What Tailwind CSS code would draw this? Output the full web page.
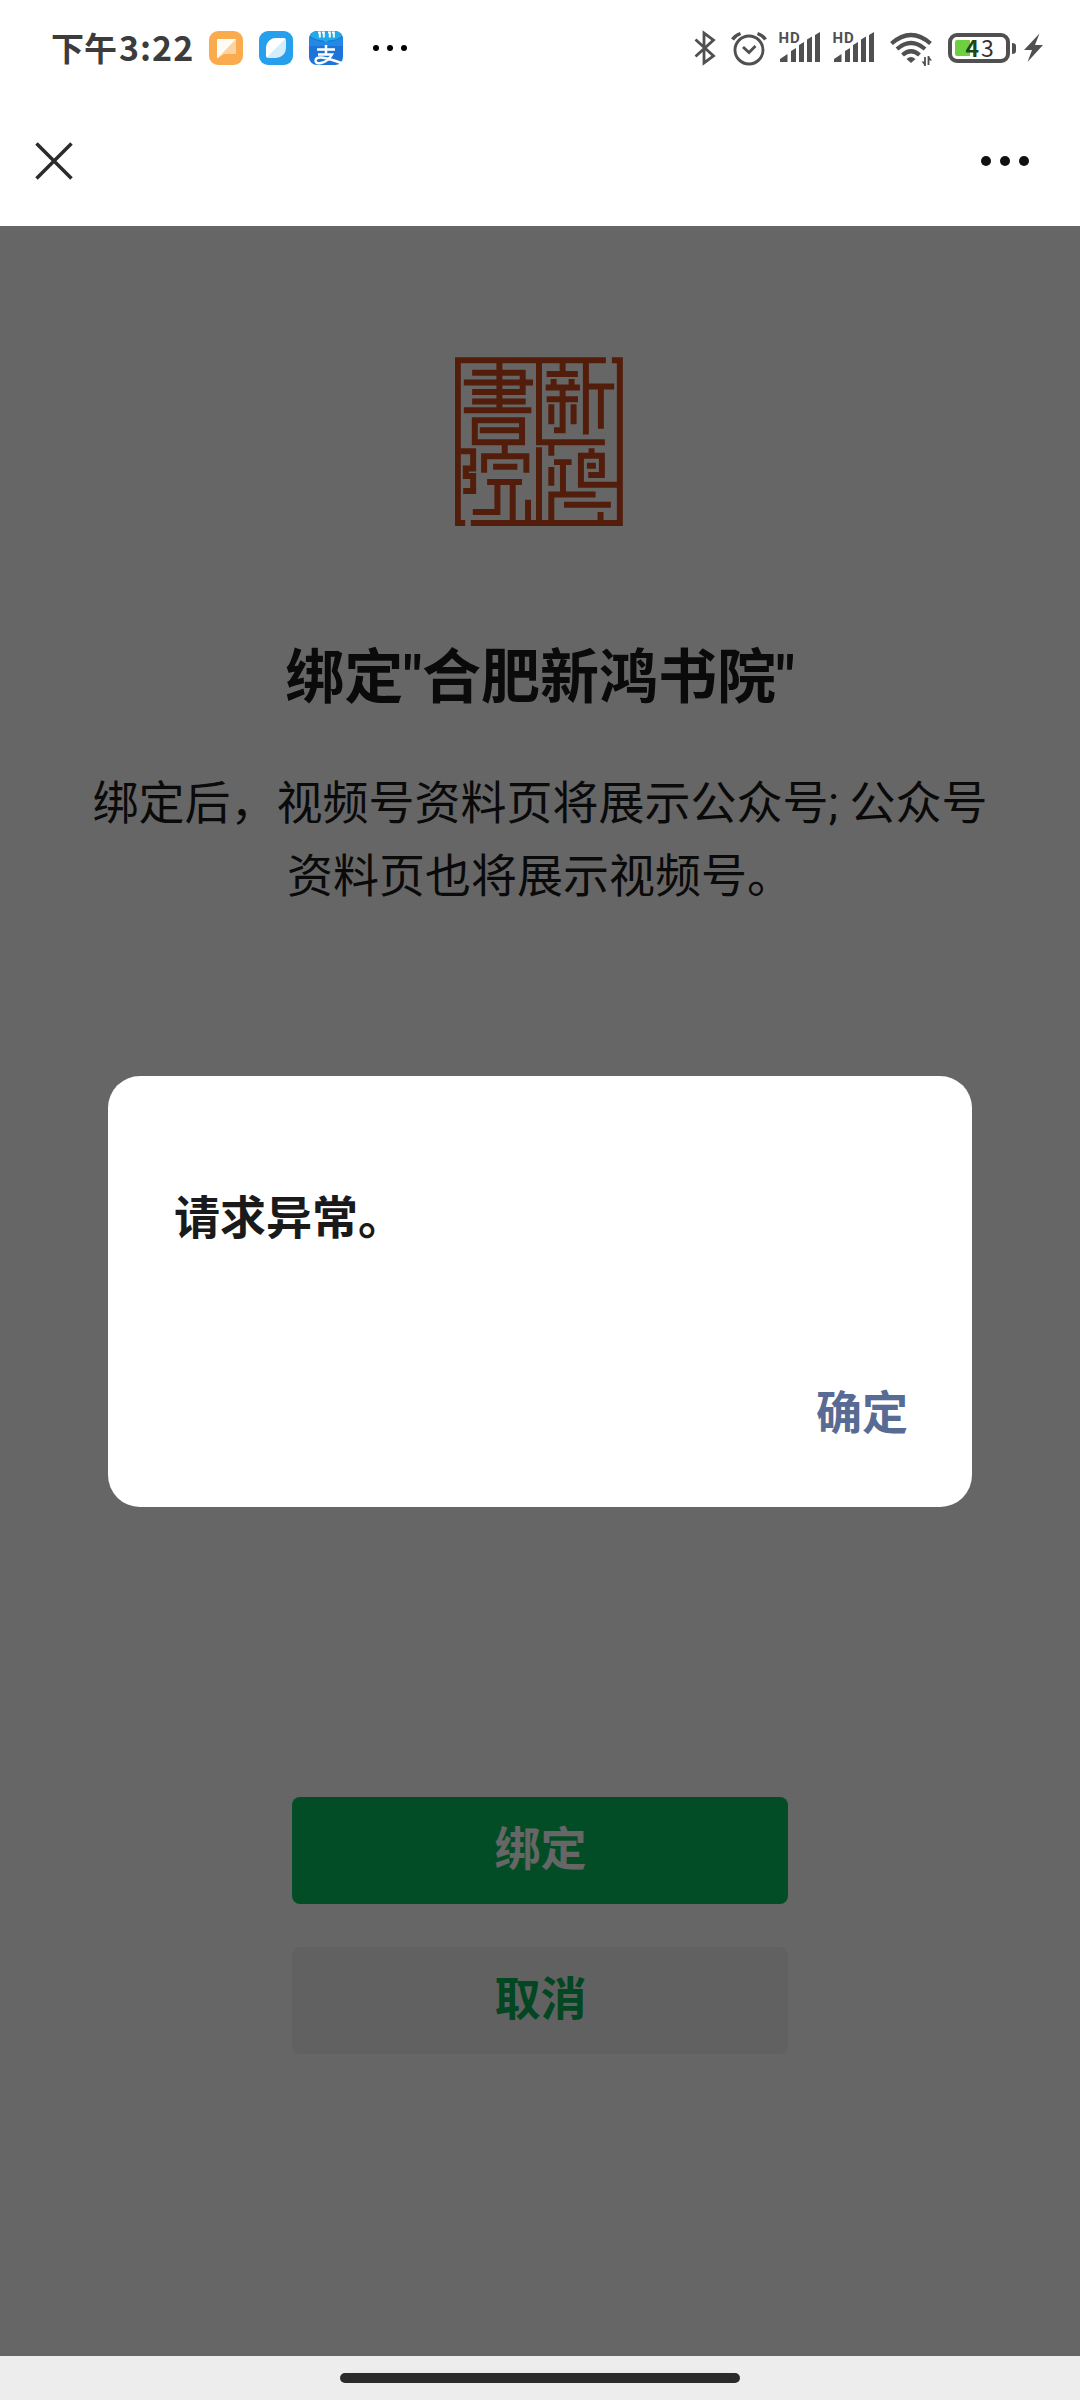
<!DOCTYPE html>
<html lang="zh-CN">
   <head>
      <meta charset="UTF-8" />
      <meta name="viewport" content="width=device-width, initial-scale=1.0" />
      <script src="https://cdn.jsdelivr.net/npm/@tailwindcss/browser@4"></script>
      <title>绑定公众号</title>
   </head>

   <body
      class="flex flex-col w-[1080px] h-[2400px] overflow-hidden bg-white font-['Noto_Sans_CJK_SC',sans-serif]"
   >
      <!-- Status Bar -->
      <div class="h-24 shrink-0 flex justify-between items-center pl-[51px] pr-[37px]">
         <div class="flex items-center text-[#3c3c3c]">
            <div class="w-[158px] flex items-center pb-0.5 font-bold leading-none whitespace-nowrap">
               <span class="text-[33px]">下午</span>
               <span class="text-[34px] tracking-[1px] ml-0.5">3:22</span>
            </div>
            <div class="flex gap-4">
               <svg class="size-[34px]" viewBox="0 0 34 34">
                  <rect width="34" height="34" rx="9" fill="#f9ab4e" />
                  <path d="M8 9q0-1 1-1h17q1 0 1 1v13q0 1-1 1H15l-6 4q-1 0-1-1z" fill="#fcd3a0" />
                  <path d="M8 9q0-1 1-1h18L9 27q-1 0-1-1z" fill="#fffaf2" />
               </svg>
               <svg class="size-[34px]" viewBox="0 0 34 34">
                  <rect width="34" height="34" rx="9" fill="#26a0ec" />
                  <path d="M17 7h8q2 0 2 2v8a10 10 0 0 1-10 10H9q-2 0-2-2v-8A10 10 0 0 1 17 7z" fill="#d3edfc" />
                  <path d="M17 7h8l1 1L8 26l-1-1v-8A10 10 0 0 1 17 7z" fill="#fff" />
               </svg>
               <svg class="size-[34px]" viewBox="0 0 34 34">
                  <rect width="34" height="34" rx="8" fill="#1c74d8" />
                  <path d="M0 6q17 10 34 0v9H0z" fill="#2489e6" />
                  <path d="M1 5Q3 0 9 0h16q6 0 8 5-5 4-13 4.500l-3 2-3-2Q6 9 1 5z" fill="#22a9e8" />
                  <path d="M9 1.500h1.800v5M13 1.500h1.800v5M19 1.500h1.800v5M23 1.500h1.800v5" fill="none" stroke="#fff" stroke-width="2" />
                  <path d="M8 18.500h18M17 14v9M9 23.500h14q-4 7-11 8.500-5 1-5.500-2 0-4 6-3.500 8 1 21 6" fill="none" stroke="#fff" stroke-width="2.500" />
               </svg>
            </div>
            <div class="flex gap-2 ml-[30px]">
               <i class="size-1.5 rounded-full bg-black"></i>
               <i class="size-1.5 rounded-full bg-black"></i>
               <i class="size-1.5 rounded-full bg-black"></i>
            </div>
         </div>

         <div class="flex items-center">
            <!-- Bluetooth -->
            <svg class="w-[22px] h-9" viewBox="0 0 22 36" fill="none" stroke="#505050" stroke-width="2.800">
               <path d="M1.500 9.500l18 16.500-9.500 7V3l9.500 7-18 16.500" />
            </svg>
            <!-- Alarm -->
            <svg class="w-9 h-9 ml-[15px]" viewBox="0 0 36 36" fill="none" stroke="#505050" stroke-width="2.900">
               <circle cx="18" cy="20" r="14" />
               <path d="M12 17l6 5.500 6.500-6.500" />
               <path d="M1.500 9.500Q4 5.500 9.500 3.500M26.500 3.500Q32 5.500 34.500 9.500" stroke-width="3.400" />
            </svg>
            <!-- Signal -->
            <svg class="w-[43px] h-9 ml-[11px] overflow-visible" viewBox="0 0 43 36" fill="#505050">
               <text x="0.500" y="13" font-family="Roboto, sans-serif" font-size="15" font-weight="700" letter-spacing="1">HD</text>
               <path d="M2 32v-3l7.500-5v8zM13 32V21l5-3v14zM21 32V15l5-3v20zM29 32V9.500l5-3V32zM37 32V5l5-3v30z" />
            </svg>
            <svg class="w-[43px] h-9 ml-[11px] overflow-visible" viewBox="0 0 43 36" fill="#505050">
               <text x="0.500" y="13" font-family="Roboto, sans-serif" font-size="15" font-weight="700" letter-spacing="1">HD</text>
               <path d="M2 32v-3l7.500-5v8zM13 32V21l5-3v14zM21 32V15l5-3v20zM29 32V9.500l5-3V32zM37 32V5l5-3v30z" />
            </svg>
            <!-- Wifi -->
            <svg class="w-[43px] h-9 ml-[15px]" viewBox="0 0 43 36" fill="none" stroke="#505050" stroke-width="4.200">
               <path d="M1.500 13.500Q21 -3.500 40.500 13.500M7 19Q21 7 35 19M12.500 25Q21 17.500 29.500 25" />
               <path d="M16.500 29q4.500-4 9 0l-4.500 4z" fill="#505050" stroke="none" />
               <path d="M35 27v9M38.500 26v9" stroke-width="1.800" />
               <path d="M35 36l-3.500-4.500H35zM38.500 26l3.500 4.500h-3.500z" fill="#505050" stroke="none" />
            </svg>
            <!-- Battery -->
            <svg class="w-[69px] h-9 ml-[15px]" viewBox="0 0 69 36">
               <rect x="2" y="5" width="58" height="26" rx="7" fill="#fff" stroke="#505050" stroke-width="4" />
               <path d="M9 10h13v16H9q-2 0-2-2V12q0-2 2-2z" fill="#6fcf43" />
               <path d="M64 13q4 0 4 3v5q0 3-4 3z" fill="#505050" />
               <text x="17.500" y="26.500" font-family="'Noto Sans CJK SC', sans-serif" font-size="23" letter-spacing="2" fill="#333"><tspan fill="#184a12" font-weight="700">4</tspan>3</text>
            </svg>
            <svg class="w-[19px] h-9 ml-[7px]" viewBox="0 0 19 36" fill="#505050">
               <path d="M15.500 3.500L0 20h8L3.500 32 19 15h-8z" />
            </svg>
         </div>
      </div>

      <!-- Header -->
      <header class="h-[130px] shrink-0 flex justify-between items-center pl-[34px] pr-[51px]">
         <svg class="size-10" viewBox="0 0 40 40" fill="none" stroke="#2b2b2b" stroke-width="3.500">
            <path d="M2.500 2.500l35 35M37.500 2.500l-35 35" />
         </svg>
         <div class="flex gap-[9px]">
            <i class="size-2.5 rounded-full bg-[#111]"></i>
            <i class="size-2.5 rounded-full bg-[#111]"></i>
            <i class="size-2.5 rounded-full bg-[#111]"></i>
         </div>
      </header>

      <!-- Main Content -->
      <main class="relative h-[2130px] shrink-0 flex flex-col items-center pt-[131px]">
         <svg class="w-[168px] h-[169px] shrink-0 -translate-x-px" viewBox="48 50 504 508" fill="none" stroke="#d04a1c" stroke-width="18">
            <!-- border -->
            <path d="M501 60H56V549H78M519 60H543V549H95" />
            <path d="M300 60V306H498M300 321V549" />
            <!-- 書 -->
            <path d="M181 60V210M99 97H251V155M74 127H282M99 155H260M99 184H260M74 210H277" />
            <path d="M107 306V240H249V306ZM122 270H249M197 306V348" />
            <!-- 院 -->
            <path d="M64 333H102V385H80V408H102V453H72M135 398V348H262V398M162 380H235M144 426H249M175 426V516H101M221 426V549M267 479V549" />
            <!-- 新 -->
            <path d="M371 60V101M323 101H417M344 116V142M398 116V142M320 142H423M323 177H417M371 142V270H345M337 192V252M404 192V252M441 60V283M441 139H526M486 139V266" />
            <!-- 鴻 -->
            <path d="M337 306V347M337 381V437M337 549V463H470M345 366H398M372 366V463M375 494H516M485 516V549" />
            <path d="M458 324V347M543 434H426V347H489V405H448M444 377H471" />
         </svg>

         <h1 class="mt-[103px] h-[88px] leading-[88px] text-[59px] font-bold text-[#1a1a1a] whitespace-nowrap">
            绑定<span class="font-[Roboto]">"</span>合肥新鸿书院<span class="font-[Roboto]">"</span>
         </h1>

         <p class="mt-[46px] text-[46px] leading-[73px] text-center text-[#1a1a1a] whitespace-nowrap">
            绑定后，视频号资料页将展示公众号<span class="font-[Roboto] leading-none">; </span>公众号<br />资料页也将展示视频号。
         </p>

         <div class="absolute top-[1571px] flex flex-col gap-[43px] text-[46px] font-bold">
            <button class="w-[496px] h-[107px] pb-2.5 pl-px rounded-lg bg-[#07c160] text-white">绑定</button>
            <button class="w-[496px] h-[107px] pb-2.5 pl-px rounded-lg bg-[#f2f2f2] text-[#06ae56]">取消</button>
         </div>

         <!-- Dialog -->
         <div class="absolute inset-0 bg-black/60 flex justify-center items-start pt-[850px]">
            <div class="w-[864px] h-[431px] flex flex-col justify-between rounded-[32px] bg-white pl-[66px] pr-16 pt-[103px] pb-[63px] text-[46px] leading-[70px]">
               <p class="font-bold text-[#1a1a1a]">请求异常。</p>
               <button class="self-end font-bold text-[#576b95]">确定</button>
            </div>
         </div>
      </main>

      <!-- Home Indicator -->
      <footer class="h-11 shrink-0 flex justify-center pt-[17px] bg-[#ededed]">
         <div class="w-[400px] h-2.5 rounded-full bg-[#2b2b2b]"></div>
      </footer>
   </body>
</html>
